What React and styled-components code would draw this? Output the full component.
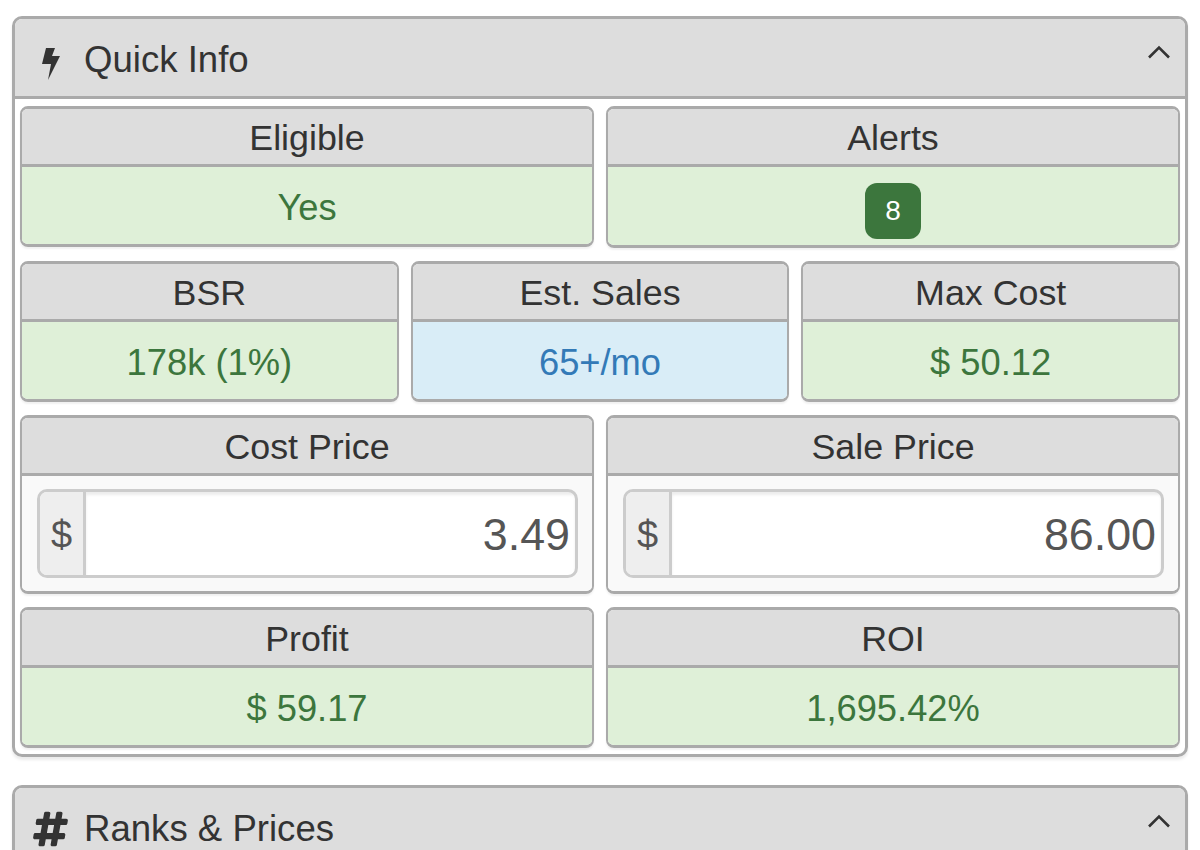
import React from 'react';
import styled, { createGlobalStyle } from 'styled-components';
import { FaHashtag } from 'react-icons/fa';

const GlobalStyle = createGlobalStyle`
  html, body {
    margin: 0;
    padding: 0;
    background: #fff;
    overflow: hidden;
  }
  body {
    font-family: "Liberation Sans", Arial, sans-serif;
    color: #333;
  }
`;

const Page = styled.div`
  height: 850px;
  overflow: hidden;
  padding: 16px 12px 0;
  box-sizing: border-box;
`;

const Panel = styled.section`
  border: 3px solid #aaa;
  border-radius: 10px;
  margin-bottom: 28px;
  box-shadow: 0 3px 3px rgba(0, 0, 0, 0.08);
  overflow: hidden;
`;

const PanelHeading = styled.header`
  display: flex;
  align-items: center;
  height: 80px;
  box-sizing: border-box;
  background: #ddd;
  border-bottom: 3px solid #aaa;
  padding: 5px 14px 0 17px;
`;

const IconSlot = styled.span`
  display: flex;
  align-items: center;
  justify-content: center;
  width: 37px;
  margin-right: 15px;
  color: #333;
`;

const PanelTitle = styled.h2`
  flex: 1;
  margin: 0;
  font-size: 36.6px;
  font-weight: 400;
  line-height: 1;
  color: #333;
`;

const Bolt = styled.svg`
  width: 18px;
  height: 32px;
  margin-top: 8px;
  fill: #333;
`;

const Hash = styled(FaHashtag)`
  width: 38px;
  height: 38px;
  stroke: currentColor;
  stroke-width: 20;
`;

const Chevron = styled.svg`
  width: 24px;
  height: 14px;
  margin-bottom: 17px;
  fill: none;
  stroke: #333;
  stroke-width: 2.6;
`;

const PanelBody = styled.div`
  display: flex;
  flex-direction: column;
  gap: 13px;
  padding: 7px 5px 6px;
`;

const Row = styled.div`
  display: grid;
  grid-template-columns: repeat(${({ $cols }) => $cols}, 1fr);
  gap: 12px;
  align-items: start;
`;

const Card = styled.div`
  border: solid #aaa;
  border-width: 3px 2px;
  border-radius: 8px;
  overflow: hidden;
  box-shadow: 0 2px 2px rgba(0, 0, 0, 0.06);
`;

const CardHeading = styled.div`
  height: 58px;
  box-sizing: border-box;
  padding-top: 3px;
  display: flex;
  align-items: center;
  justify-content: center;
  background: #ddd;
  border-bottom: 3px solid #aaa;
  font-size: 35.8px;
  color: #333;
`;

const tones = {
  success: { bg: '#dff0d8', fg: '#3c763d' },
  info: { bg: '#d9edf7', fg: '#337ab7' },
};

const CardValue = styled.div`
  height: ${({ $tall }) => ($tall ? 78 : 77)}px;
  display: flex;
  align-items: center;
  justify-content: center;
  padding-top: 5px;
  box-sizing: border-box;
  font-size: 36.3px;
  background: ${({ $tone }) => tones[$tone].bg};
  color: ${({ $tone }) => tones[$tone].fg};
`;

const Badge = styled.span`
  display: flex;
  align-items: center;
  justify-content: center;
  width: 56px;
  height: 56px;
  margin-top: 4px;
  border-radius: 12px;
  background: #3c763d;
  color: #fff;
  font-size: 28px;
`;

const InputBody = styled.div`
  height: 115px;
  box-sizing: border-box;
  padding: 13px 14px 13px 15px;
  background: #f9f9f9;
`;

const InputGroup = styled.div`
  display: flex;
  height: 89px;
  box-sizing: border-box;
  border: 3px solid #ccc;
  border-radius: 10px;
  overflow: hidden;
  background: #fff;
`;

const InputAddon = styled.span`
  display: flex;
  align-items: center;
  justify-content: center;
  width: 43px;
  padding-top: 4px;
  box-sizing: content-box;
  background: #eee;
  border-right: 3px solid #ccc;
  font-size: 38px;
  color: #555;
`;

const InputValue = styled.div`
  flex: 1;
  display: flex;
  align-items: center;
  justify-content: flex-end;
  padding: 2px 5px 0 0;
  font-size: 44.8px;
  color: #555;
  box-shadow: inset 0 3px 3px rgba(0, 0, 0, 0.075);
`;

const BoltIcon = () => (
  <Bolt viewBox="0 0 18 32">
    <path d="M4 0h9l-3 8h8L6 32l3-16H0z" />
  </Bolt>
);

const ChevronUp = () => (
  <Chevron viewBox="0 0 24 14">
    <path d="M2 12.5 12 2.5l10 10" />
  </Chevron>
);

const Stat = ({ label, tone = 'success', children, tall }) => (
  <Card>
    <CardHeading>{label}</CardHeading>
    <CardValue $tone={tone} $tall={tall}>{children}</CardValue>
  </Card>
);

const PriceInput = ({ label, value }) => (
  <Card>
    <CardHeading>{label}</CardHeading>
    <InputBody>
      <InputGroup>
        <InputAddon>$</InputAddon>
        <InputValue>{value}</InputValue>
      </InputGroup>
    </InputBody>
  </Card>
);

const App = () => (
  <Page>
    <GlobalStyle />
    <Panel>
      <PanelHeading>
        <IconSlot><BoltIcon /></IconSlot>
        <PanelTitle>Quick Info</PanelTitle>
        <ChevronUp />
      </PanelHeading>
      <PanelBody>
        <Row $cols={2}>
          <Stat label="Eligible">Yes</Stat>
          <Stat label="Alerts" tall><Badge>8</Badge></Stat>
        </Row>
        <Row $cols={3}>
          <Stat label="BSR">178k (1%)</Stat>
          <Stat label="Est. Sales" tone="info">65+/mo</Stat>
          <Stat label="Max Cost">$ 50.12</Stat>
        </Row>
        <Row $cols={2}>
          <PriceInput label="Cost Price" value="3.49" />
          <PriceInput label="Sale Price" value="86.00" />
        </Row>
        <Row $cols={2}>
          <Stat label="Profit">$ 59.17</Stat>
          <Stat label="ROI">1,695.42%</Stat>
        </Row>
      </PanelBody>
    </Panel>
    <Panel>
      <PanelHeading>
        <IconSlot><Hash /></IconSlot>
        <PanelTitle>Ranks &amp; Prices</PanelTitle>
        <ChevronUp />
      </PanelHeading>
    </Panel>
  </Page>
);

export default App;
